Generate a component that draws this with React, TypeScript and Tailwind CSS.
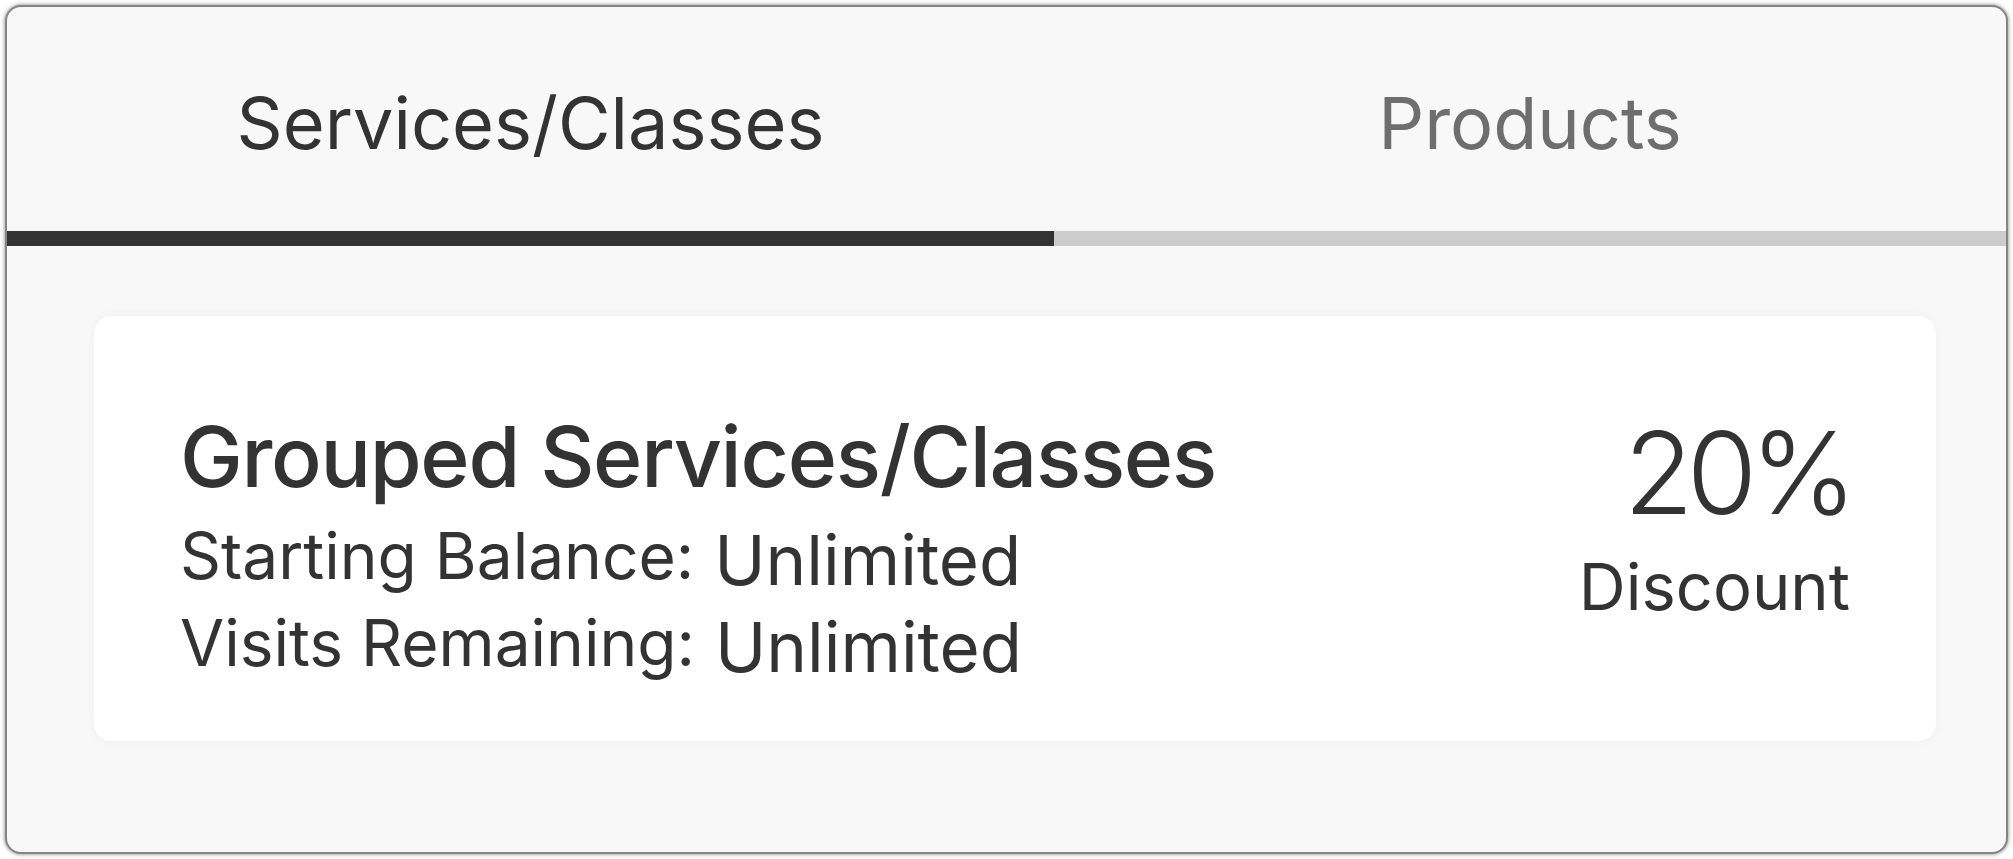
const tabs = [
  { label: "Services/Classes", active: true, width: "w-[1047px]" },
  { label: "Products", active: false, width: "flex-1" },
];

const rows = [
  { label: "Starting Balance:", value: "Unlimited" },
  { label: "Visits Remaining:", value: "Unlimited" },
];

const App = () => {
  return (
    <div className="w-[2013px] h-[859px] bg-white p-[5px] font-['Inter','Noto_Sans',sans-serif] text-[#333333]">
      <div className="w-[2003px] h-[849px] rounded-[16px] border-2 border-[#858585] bg-[#f8f8f8] shadow-[0_0_4px_rgba(0,0,0,0.5)] overflow-hidden">
        {/* tab header */}
        <div className="flex">
          {tabs.map((tab) => (
            <div key={tab.label} className={`${tab.width} flex flex-col`}>
              <div
                className={`h-[224px] flex items-center justify-center pt-[8px] text-[72px] leading-none ${
                  tab.active ? "text-[#333333]" : "text-[#6e6e6e]"
                }`}
              >
                {tab.label}
              </div>
              <div className={`h-[15px] ${tab.active ? "bg-[#333333]" : "bg-[#cccccc]"}`} />
            </div>
          ))}
        </div>

        {/* membership card */}
        <div className="pl-[87px] pr-[70px] pt-[70px]">
          <div className="h-[425px] rounded-[18px] bg-white shadow-[0_0_12px_rgba(0,0,0,0.04)] flex justify-between items-start px-[86px] pt-[91px]">
            <div>
              <h2 className="text-[84px] leading-[100px] font-medium tracking-[-1.3px]">Grouped Services/Classes</h2>
              <div className="mt-[9px]">
                {rows.map((row) => (
                  <div key={row.label} className="h-[87px] flex items-start gap-[20px]">
                    <span className="text-[64px] leading-[80px]">{row.label}</span>
                    <span className="text-[69px] leading-[80px] mt-[4px]">{row.value}</span>
                  </div>
                ))}
              </div>
            </div>
            <div className="text-right mt-[6px]">
              <div className="text-[114px] leading-[120px] font-light tracking-[-7px]">20%</div>
              <div className="text-[65px] leading-[80px] mt-[14px]">Discount</div>
            </div>
          </div>
        </div>
      </div>
    </div>
  );
};

export default App;
